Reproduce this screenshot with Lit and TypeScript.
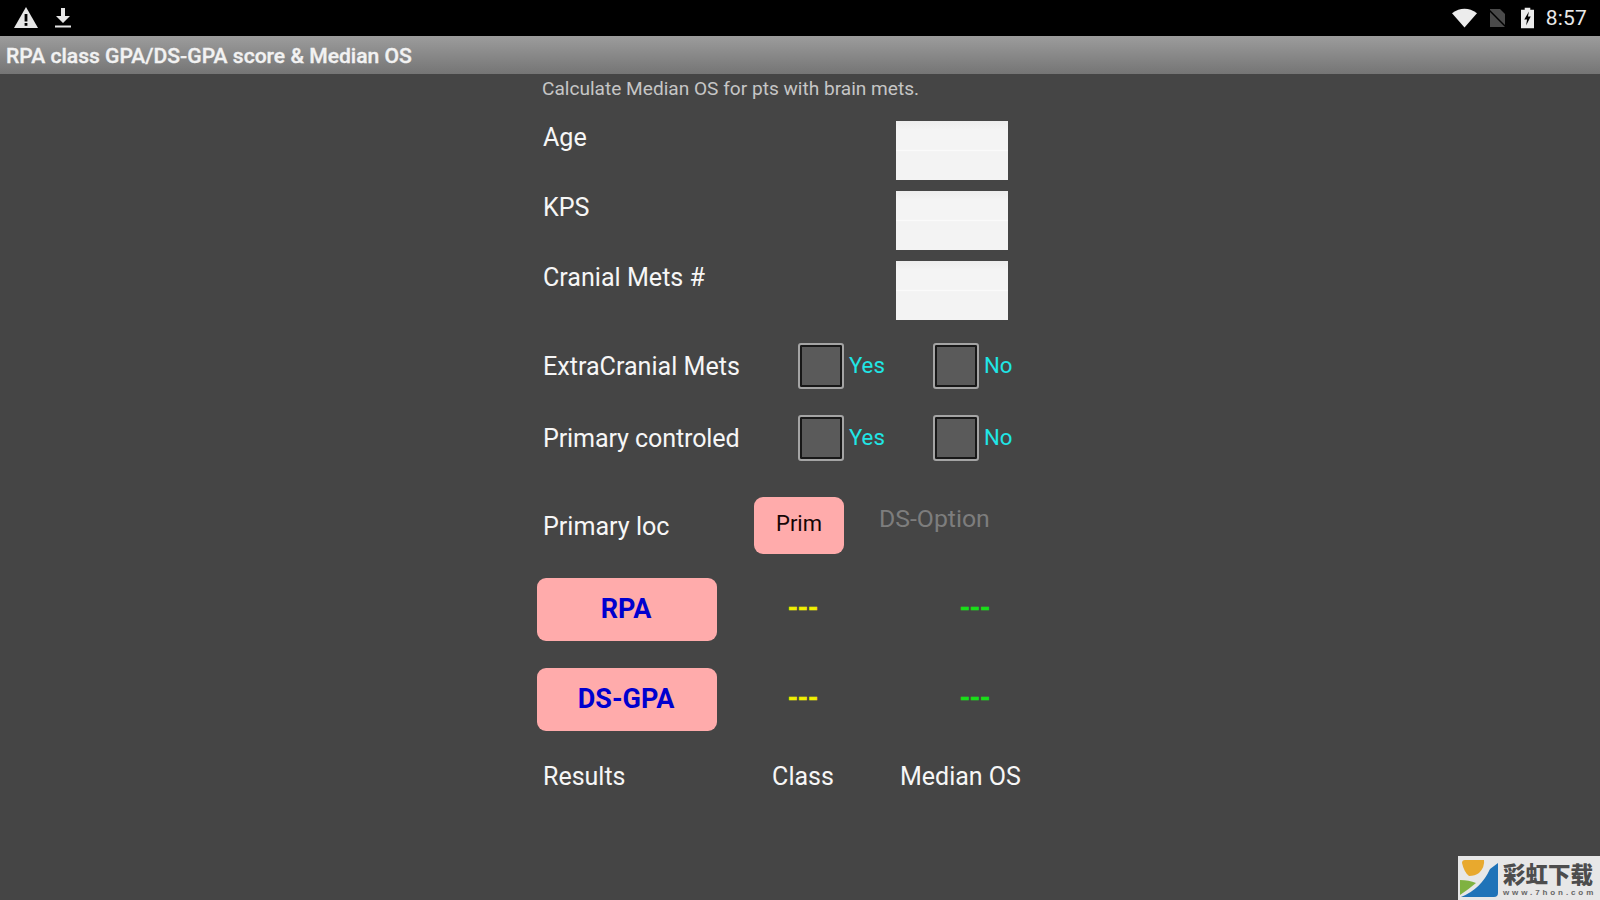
import { LitElement, html, css } from "lit";
import { customElement } from "lit/decorators.js";

@customElement("app-root")
export class AppRoot extends LitElement {
  static styles = css`
    :host { display: block; width: 1600px; height: 900px; position: relative; overflow: hidden; background: #454545; font-family: Roboto, "Liberation Sans", sans-serif; color: #f4f4f4; }
    .status { height: 36px; background: #000; display: flex; align-items: center; justify-content: space-between; padding: 0 13px 0 14px; box-sizing: border-box; }
    .left, .right { display: flex; align-items: center; }
    .left svg { display: block; }
    .dl { margin-left: 16px; }
    .sim { margin-left: 10px; }
    .bat { margin-left: 14px; }
    .clock { font-size: 21px; color: #e8e8e8; margin-left: 12px; letter-spacing: .2px; }
    .title { height: 38px; background: linear-gradient(#9c9c9c, #757575); box-sizing: border-box; padding-left: 6px; font-size: 21.1px; font-weight: 500; line-height: 40px; color: #f2f2f2; -webkit-text-stroke: .35px #f2f2f2; }
    .form { margin-left: 537px; width: 500px; }
    .sub { font-size: 19.1px; color: #c6c6c6; line-height: 26px; height: 47px; padding-left: 5px; box-sizing: border-box; padding-top: 2px; }
    .row { display: flex; }
    .label { font-size: 25.1px; line-height: 34px; padding-left: 6px; color: #f6f6f6; }
    .tight { letter-spacing: -.12px; }
    .input-row { height: 59px; margin-bottom: 11px; justify-content: space-between; padding-right: 29px; }
    .input { width: 112px; height: 59px; background: linear-gradient(#ededed, #f4f4f4 15%, #f4f4f4 48%, #fafafa 50%, #f3f3f3 52%, #f3f3f3); }
    .check-row { height: 46px; align-items: center; margin-bottom: 26px; }
    .check-row .label { width: 261px; box-sizing: border-box; flex: none; margin-top: 1px; }
    .first { margin-top: 23px; }
    .opt { display: flex; align-items: center; width: 135px; flex: none; }
    .box { width: 46px; height: 46px; box-sizing: border-box; border: 2px solid #a4a4a4; border-radius: 3px; background: #5a5a5a; box-shadow: inset 0 0 0 2px #181818; flex: none; }
    .opt span { font-size: 22.2px; color: #20e6e6; margin-left: 5px; margin-top: -2px; }
    .loc { height: 57px; align-items: center; margin-top: 36px; margin-bottom: 24px; }
    .loc .label { width: 217px; box-sizing: border-box; flex: none; margin-top: 2px; }
    .prim { width: 90px; height: 57px; background: #ffabab; border-radius: 9px; color: #160606; font-size: 22px; display: flex; align-items: center; justify-content: center; padding-bottom: 4px; box-sizing: border-box; }
    .ds { font-size: 24.8px; color: #7d7d7d; margin-left: 35px; margin-top: -14px; }
    .res-row { height: 63px; align-items: center; margin-bottom: 27px; }
    .big { width: 180px; height: 63px; padding: 0 2px 2px 0; box-sizing: border-box; background: #ffabab; border-radius: 9px; color: #0000cf; font-size: 27px; font-weight: 700; display: flex; align-items: center; justify-content: center; flex: none; }
    .dash { font-size: 26px; font-weight: 700; text-align: center; margin-top: -4px; -webkit-text-stroke: .6px currentColor; }
    .cls { width: 172px; color: #f0f000; flex: none; }
    .os { width: 172px; color: #18e018; flex: none; }
    .foot { align-items: center; margin-top: 29px; line-height: 34px; font-size: 25px; color: #f6f6f6; }
    .foot .a { width: 235px; flex: none; padding-left: 6px; box-sizing: border-box; }
    .foot .b { width: 62px; flex: none; text-align: center; }
    .foot .c { margin-left: 66px; white-space: nowrap; }
    .mark { position: absolute; right: 0; bottom: 0; width: 142px; height: 44px; background: #e7e7e7; display: flex; align-items: center; padding-left: 1px; box-sizing: border-box; }
    .mark svg { flex: none; display: block; }
    .mark-text { margin-left: 4px; display: flex; flex-direction: column; }
    .cn { font-family: "Noto Sans CJK SC", sans-serif; font-weight: 900; font-size: 22.5px; line-height: 30px; height: 30px; color: #4d4d4d; white-space: nowrap; overflow: hidden; }
    .en { font-family: "Liberation Sans", sans-serif; font-weight: 700; font-size: 8px; line-height: 10px; letter-spacing: 2.9px; color: #666; white-space: nowrap; }
  `;

  opt(t: string) {
    return html`<div class="opt"><div class="box"></div><span>${t}</span></div>`;
  }

  render() {
    return html`
      <div class="status">
        <div class="left">
          <svg width="24" height="22" viewBox="0 0 24 22"><path fill="#e6e6e6" d="M12 0 L24 21 H0 Z"/><rect x="10.6" y="7" width="2.8" height="7.5" fill="#000"/><rect x="10.6" y="16" width="2.8" height="2.8" fill="#000"/></svg>
          <svg class="dl" width="18" height="22" viewBox="0 0 18 22"><path fill="#e6e6e6" d="M7 1 H11 V9 H16 L9 16 L2 9 H7 Z"/><rect x="1" y="18.5" width="16" height="2" fill="#e6e6e6"/></svg>
        </div>
        <div class="right">
          <svg width="25" height="20" viewBox="0 0 26 20"><path fill="#ececec" d="M0 5 Q13 -4 26 5 L13 20 Z"/></svg>
          <svg class="sim" width="20" height="20" viewBox="0 0 20 20"><path fill="#4a4a4a" d="M3 1 H13 L18 6 V19 H3 Z"/><path stroke="#000" stroke-width="1.5" d="M0 0 L20 20"/></svg>
          <svg class="bat" width="13" height="22" viewBox="0 0 14 22"><path fill="#ececec" d="M4 0 H10 V2 H14 V22 H0 V2 H4 Z"/><path fill="#000" d="M8.5 4 L3.5 12.5 H6.5 L5.5 19 L10.5 9.5 H7.5 Z"/></svg>
          <span class="clock">8:57</span>
        </div>
      </div>
      <div class="title">RPA class GPA/DS-GPA score &amp; Median OS</div>
      <div class="form">
        <div class="sub">Calculate Median OS for pts with brain mets.</div>
        <div class="row input-row"><div class="label">Age</div><div class="input"></div></div>
        <div class="row input-row"><div class="label">KPS</div><div class="input"></div></div>
        <div class="row input-row"><div class="label">Cranial Mets #</div><div class="input"></div></div>
        <div class="row check-row first"><div class="label">ExtraCranial Mets</div>${this.opt("Yes")}${this.opt("No")}</div>
        <div class="row check-row"><div class="label tight">Primary controled</div>${this.opt("Yes")}${this.opt("No")}</div>
        <div class="row loc"><div class="label">Primary loc</div><div class="prim">Prim</div><div class="ds">DS-Option</div></div>
        <div class="row res-row"><div class="big">RPA</div><div class="dash cls">---</div><div class="dash os">---</div></div>
        <div class="row res-row"><div class="big">DS-GPA</div><div class="dash cls">---</div><div class="dash os">---</div></div>
        <div class="row foot"><div class="a">Results</div><div class="b">Class</div><div class="c">Median OS</div></div>
      </div>
      <div class="mark">
        <svg width="40" height="38" viewBox="0 0 40 38">
          <path fill="#e8a92e" d="M3 4 Q3 1 6 1 H25 Q26 8 20 14 Q16 17 10 17 Q5 13 3 4 Z"/>
          <path fill="#7fb241" d="M1 21 Q10 21 17 24 Q10 30 1 36 Z"/>
          <path fill="#1f73b8" d="M2 38 Q22 30 31 10 L39 4 V34 Q39 38 35 38 Z"/>
        </svg>
        <div class="mark-text">
          <div class="cn">彩虹下载</div>
          <div class="en">www.7hon.com</div>
        </div>
      </div>
    `;
  }
}
